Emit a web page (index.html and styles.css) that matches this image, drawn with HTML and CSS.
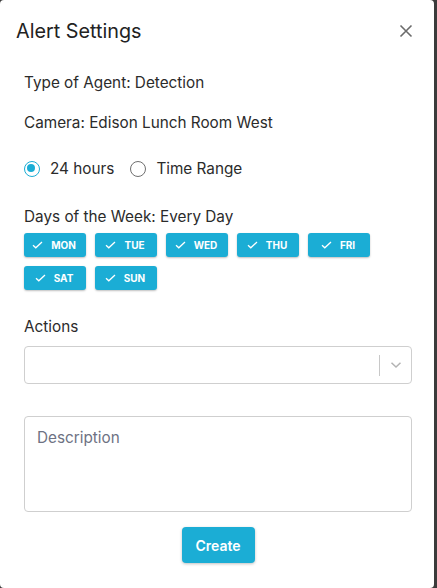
FILE: index.html
```html
<!DOCTYPE html>
<html lang="en">
<head>
  <meta charset="UTF-8">
  <meta name="viewport" content="width=device-width, initial-scale=1.0">
  <title>Alert Settings</title>
  <link rel="stylesheet" href="styles.css">
</head>
<body>
  <div class="dialog">
    <header class="dialog-head">
      <h1>Alert Settings</h1>
      <button class="close" aria-label="Close">
        <svg width="14" height="14" viewBox="0 0 14 14"><path d="M1.5 1.5l11 11M12.5 1.5l-11 11" stroke="#6b6b6b" stroke-width="1.6" fill="none"/></svg>
      </button>
    </header>

    <div class="dialog-body">
      <p class="info">Type of Agent: Detection</p>
      <p class="info">Camera: Edison Lunch Room West</p>

      <div class="radios">
        <label class="radio checked"><span class="dot"></span>24 hours</label>
        <label class="radio"><span class="dot"></span>Time Range</label>
      </div>

      <p class="days-label">Days of the Week: Every Day</p>
      <div class="chips">
        <span class="chip"><svg width="11" height="8" viewBox="0 0 11 8"><path d="M1 4.2l2.8 2.6L10 1" stroke="#fff" stroke-width="1.3" fill="none"/></svg>MON</span>
        <span class="chip"><svg width="11" height="8" viewBox="0 0 11 8"><path d="M1 4.2l2.8 2.6L10 1" stroke="#fff" stroke-width="1.3" fill="none"/></svg>TUE</span>
        <span class="chip"><svg width="11" height="8" viewBox="0 0 11 8"><path d="M1 4.2l2.8 2.6L10 1" stroke="#fff" stroke-width="1.3" fill="none"/></svg>WED</span>
        <span class="chip"><svg width="11" height="8" viewBox="0 0 11 8"><path d="M1 4.2l2.8 2.6L10 1" stroke="#fff" stroke-width="1.3" fill="none"/></svg>THU</span>
        <span class="chip"><svg width="11" height="8" viewBox="0 0 11 8"><path d="M1 4.2l2.8 2.6L10 1" stroke="#fff" stroke-width="1.3" fill="none"/></svg>FRI</span>
        <span class="chip"><svg width="11" height="8" viewBox="0 0 11 8"><path d="M1 4.2l2.8 2.6L10 1" stroke="#fff" stroke-width="1.3" fill="none"/></svg>SAT</span>
        <span class="chip"><svg width="11" height="8" viewBox="0 0 11 8"><path d="M1 4.2l2.8 2.6L10 1" stroke="#fff" stroke-width="1.3" fill="none"/></svg>SUN</span>
      </div>

      <p class="actions-label">Actions</p>
      <div class="select">
        <span class="select-value"></span>
        <span class="sep"></span>
        <svg class="chev" width="12" height="8" viewBox="0 0 12 8"><path d="M1.5 1.8l4.5 4.2 4.5-4.2" stroke="#b3b3b3" stroke-width="1.5" fill="none"/></svg>
      </div>

      <textarea class="desc" placeholder="Description"></textarea>

      <div class="footer">
        <button class="create">Create</button>
      </div>
    </div>
  </div>
</body>
</html>
```

FILE: styles.css
```css
body {
  margin: 0;
  background: #3b3b3b;
  font-family: 'Inter', 'Noto Sans', sans-serif;
  color: #2b2b2b;
}
.dialog {
  width: 434px;
  height: 588px;
  background: #fff;
  border-radius: 4px;
  box-sizing: border-box;
}
.dialog-head {
  display: flex;
  align-items: center;
  justify-content: space-between;
  padding: 19px 24px 0 16px;
}
.dialog-head h1 {
  margin: 0;
  font-size: 19.8px;
  font-weight: 400;
  color: #222;
  line-height: 24px;
}
.close {
  border: 0;
  background: none;
  padding: 0;
  width: 14px;
  height: 14px;
  display: flex;
  margin-right: -3px;
}
.dialog-body {
  padding: 0 22px 0 24px;
}
.info {
  margin: 0;
  font-size: 15.3px;
  line-height: 20px;
}
.info:first-child {
  margin-top: 30px;
}
.info + .info {
  margin-top: 20px;
}
.radios {
  display: flex;
  gap: 16px;
  margin-top: 26px;
}
.radio {
  display: flex;
  align-items: center;
  gap: 10px;
  font-size: 15.3px;
  line-height: 20px;
}
.dot {
  width: 16px;
  height: 16px;
  border: 1.6px solid #6f6f6f;
  border-radius: 50%;
  box-sizing: border-box;
  position: relative;
}
.checked .dot {
  border-color: #1badd5;
}
.checked .dot::after {
  content: '';
  position: absolute;
  left: 2.4px;
  top: 2.4px;
  width: 8px;
  height: 8px;
  border-radius: 50%;
  background: #1badd5;
}
.days-label {
  margin: 28px 0 0;
  font-size: 15.3px;
  line-height: 20px;
}
.chips {
  display: flex;
  flex-wrap: wrap;
  gap: 9px 9px;
  margin-top: 6px;
  width: 360px;
}
.chip {
  width: 62px;
  height: 24px;
  background: #1badd5;
  color: #fff;
  border-radius: 3px;
  box-shadow: 0 1px 2px rgba(0, 0, 0, 0.25);
  display: flex;
  align-items: center;
  justify-content: center;
  gap: 8px;
  font-size: 10px;
  font-weight: 700;
  box-sizing: border-box;
  padding-right: 2px;
}
.actions-label {
  margin: 27px 0 0;
  font-size: 15.3px;
  line-height: 20px;
}
.select {
  margin-top: 9px;
  height: 38px;
  border: 1px solid #cfcfcf;
  border-radius: 4px;
  box-sizing: border-box;
  display: flex;
  align-items: center;
  width: 388px;
}
.select-value {
  flex: 1;
}
.sep {
  width: 1px;
  height: 21px;
  background: #c8c8c8;
}
.chev {
  margin: 0 9px 0 10px;
}
.desc {
  display: block;
  margin-top: 32px;
  width: 388px;
  height: 96px;
  border: 1px solid #cfcfcf;
  border-radius: 4px;
  box-sizing: border-box;
  padding: 11px 12px;
  font-family: inherit;
  font-size: 15.3px;
  resize: none;
}
.desc::placeholder {
  color: #6e7283;
}
.footer {
  display: flex;
  justify-content: center;
  margin-top: 15px;
  width: 388px;
}
.create {
  width: 73px;
  height: 36px;
  border: 0;
  border-radius: 4px;
  background: #1badd5;
  color: #fff;
  font-family: inherit;
  font-size: 14px;
  font-weight: 600;
  box-shadow: 0 1px 3px rgba(0, 0, 0, 0.25);
}
```
